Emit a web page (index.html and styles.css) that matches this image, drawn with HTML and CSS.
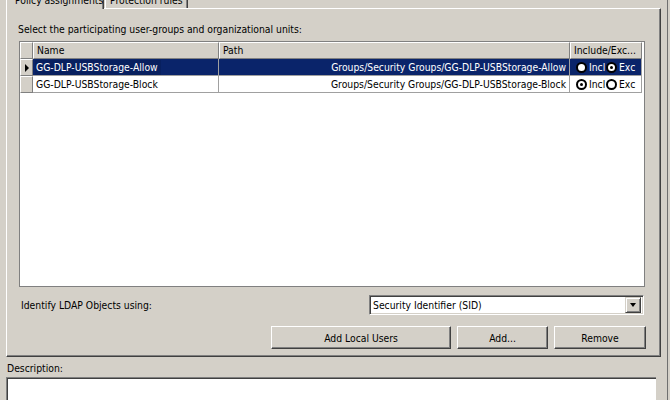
FILE: index.html
```html
<!DOCTYPE html>
<html>
<head>
<meta charset="utf-8">
<link rel="stylesheet" href="styles.css">
</head>
<body>
<div class="window">
  <div class="main">
    <div class="tabs">
      <div class="tab tab-active">Policy assignments</div>
      <div class="tab">Protection rules</div>
    </div>
    <div class="panel">
      <div class="intro">Select the participating user-groups and organizational units:</div>
      <div class="grid">
        <div class="grow ghead">
          <div class="cell sel hcell"></div>
          <div class="cell c-name hcell">Name</div>
          <div class="cell c-path hcell">Path</div>
          <div class="cell c-inc hcell">Include/Exc...</div>
        </div>
        <div class="grow selected">
          <div class="cell sel"><span class="arrow"></span></div>
          <div class="cell c-name"><span class="focus">GG-DLP-USBStorage-Allow</span></div>
          <div class="cell c-path right">Groups/Security Groups/GG-DLP-USBStorage-Allow</div>
          <div class="cell c-inc"><span class="radio"></span><span class="rl incl">Incl</span><span class="radio on"></span><span class="rl">Exc</span></div>
        </div>
        <div class="grow">
          <div class="cell sel"></div>
          <div class="cell c-name">GG-DLP-USBStorage-Block</div>
          <div class="cell c-path right">Groups/Security Groups/GG-DLP-USBStorage-Block</div>
          <div class="cell c-inc"><span class="radio on"></span><span class="rl incl">Incl</span><span class="radio"></span><span class="rl">Exc</span></div>
        </div>
      </div>
      <div class="ldap">
        <div class="ldap-label">Identify LDAP Objects using:</div>
        <div class="combo">
          <span class="combo-text">Security Identifier (SID)</span>
          <span class="combo-btn"><span class="tri"></span></span>
        </div>
      </div>
      <div class="buttons">
        <div class="btn b-local">Add Local Users</div>
        <div class="btn b-add">Add...</div>
        <div class="btn b-remove">Remove</div>
      </div>
    </div>
    <div class="desc-label">Description:</div>
    <div class="desc-box"></div>
  </div>
  <div class="edge"></div>
</div>
</body>
</html>
```
FILE: styles.css
```css
html, body {
  margin: 0;
  padding: 0;
  background: #d4d0c8;
}
body {
  font-family: "DejaVu Sans Condensed", "Liberation Sans", Arial, sans-serif;
  font-size: 10.3px;
  color: #000;
}
.window {
  width: 670px;
  height: 400px;
  overflow: hidden;
  display: flex;
  background: #d4d0c8;
}
.main {
  width: 661px;
  padding-left: 6px;
  box-sizing: border-box;
  display: flex;
  flex-direction: column;
}
.main > * {
  flex: none;
}
.edge {
  margin-left: 6px;
  width: 1px;
  background: #6f6f6f;
}
.tabs {
  display: flex;
  height: 19px;
  margin-top: -11px;
  align-items: flex-end;
}
.tab {
  height: 18px;
  box-sizing: border-box;
  padding: 3px 6px 0;
  border-top: 1px solid #fff;
  border-left: 1px solid #fff;
  border-right: 1px solid #404040;
  line-height: 13px;
  white-space: nowrap;
  overflow: hidden;
  box-shadow: inset -1px 0 0 #808080;
}
.tab-active {
  height: 20px;
  width: 98px;
  margin-bottom: -1px;
  position: relative;
  z-index: 1;
  background: #d4d0c8;
  padding-left: 8px;
  padding-top: 4px;
}
.tab:not(.tab-active) {
  width: 83px;
  margin-left: 1px;
  padding-left: 4px;
}
.panel {
  height: 349px;
  box-sizing: border-box;
  border-top: 1px solid #fff;
  border-left: 1px solid #fff;
  border-right: 1px solid #404040;
  border-bottom: 1px solid #404040;
  box-shadow: inset -1px -1px 0 #808080;
  padding: 14px 15px 0 12px;
  display: flex;
  flex-direction: column;
}
.panel > * {
  flex: none;
}
.intro {
  line-height: 13px;
  margin-left: -1px;
}
.grid {
  margin-top: 5px;
  height: 246px;
  box-sizing: border-box;
  border: 1px solid #808080;
  background: #fff;
}
.grow {
  display: flex;
  height: 17px;
}
.cell {
  box-sizing: border-box;
  height: 17px;
  line-height: 16px;
  padding: 0 3px;
  border-right: 1px solid #a0a0a0;
  border-bottom: 1px solid #a0a0a0;
  white-space: nowrap;
  overflow: hidden;
}
.sel {
  width: 13px;
  padding: 0;
  background: #d4d0c8;
  border-top: 1px solid #fff;
  border-left: 1px solid #fff;
  border-right: 1px solid #808080;
  border-bottom: 1px solid #808080;
  display: flex;
  align-items: center;
  justify-content: center;
}
.hcell {
  background: #d4d0c8;
  border-top: 1px solid #fff;
  border-left: 1px solid #fff;
  border-right: 1px solid #808080;
  border-bottom: 1px solid #808080;
  line-height: 15px;
}
.c-name { width: 186px; }
.c-path { width: 351px; }
.c-inc { width: 72px; display: flex; align-items: center; padding: 0 0 0 6px; }
.hcell.c-inc { display: block; padding: 0 3px; }
.right { text-align: right; }
.selected .cell:not(.sel) {
  background: #0a246a;
  color: #fff;
}
.focus {
  display: inline-block;
  padding: 0 3px 0 1px;
  margin-left: -1px;
  background: #08205f;
  line-height: 15px;
}
.arrow {
  width: 0;
  height: 0;
  border-top: 4px solid transparent;
  border-bottom: 4px solid transparent;
  border-left: 4px solid #000;
  margin-left: 1px;
}
.radio {
  width: 11px;
  height: 11px;
  box-sizing: border-box;
  border-radius: 50%;
  border: 2px solid #000;
  background: #fff;
  flex: none;
  display: flex;
  align-items: center;
  justify-content: center;
}
.radio.on::after {
  content: "";
  width: 3px;
  height: 3px;
  border-radius: 50%;
  background: #000;
}
.rl {
  margin-left: 2px;
  flex: none;
}
.incl {
  width: 17px;
  overflow: hidden;
}
.ldap {
  display: flex;
  align-items: center;
  margin-top: 8px;
  height: 20px;
}
.ldap-label {
  padding-left: 2px;
  flex: 1;
}
.combo {
  width: 275px;
  height: 20px;
  box-sizing: border-box;
  background: #fff;
  border-top: 1px solid #808080;
  border-left: 1px solid #808080;
  border-right: 1px solid #fff;
  border-bottom: 1px solid #fff;
  box-shadow: inset 1px 1px 0 #404040, inset -1px -1px 0 #d4d0c8;
  display: flex;
  align-items: center;
  padding: 0 2px 0 3px;
  margin-right: 1px;
}
.combo-text { flex: 1; }
.combo-btn {
  width: 16px;
  height: 16px;
  box-sizing: border-box;
  background: #d4d0c8;
  border-top: 1px solid #d4d0c8;
  border-left: 1px solid #d4d0c8;
  border-right: 1px solid #404040;
  border-bottom: 1px solid #404040;
  box-shadow: inset 1px 1px 0 #fff, inset -1px -1px 0 #808080;
  display: flex;
  align-items: center;
  justify-content: center;
}
.tri {
  width: 0;
  height: 0;
  border-left: 3.5px solid transparent;
  border-right: 3.5px solid transparent;
  border-top: 4px solid #000;
}
.buttons {
  display: flex;
  justify-content: flex-end;
  gap: 6px;
  margin-top: 11px;
  margin-right: -1px;
}
.btn {
  height: 23px;
  box-sizing: border-box;
  background: #d4d0c8;
  border-top: 1px solid #fff;
  border-left: 1px solid #fff;
  border-right: 1px solid #404040;
  border-bottom: 1px solid #404040;
  box-shadow: inset -1px -1px 0 #808080;
  display: flex;
  align-items: center;
  justify-content: center;
}
.b-local { width: 180px; }
.b-add { width: 91px; }
.b-remove { width: 92px; }
.desc-label {
  margin-top: 5px;
  line-height: 13px;
  padding-left: 1px;
}
.desc-box {
  margin-top: 2px;
  width: 650px;
  height: 40px;
  box-sizing: border-box;
  background: #fff;
  border-top: 1px solid #808080;
  border-left: 1px solid #808080;
  box-shadow: inset 1px 1px 0 #404040;
}
```
